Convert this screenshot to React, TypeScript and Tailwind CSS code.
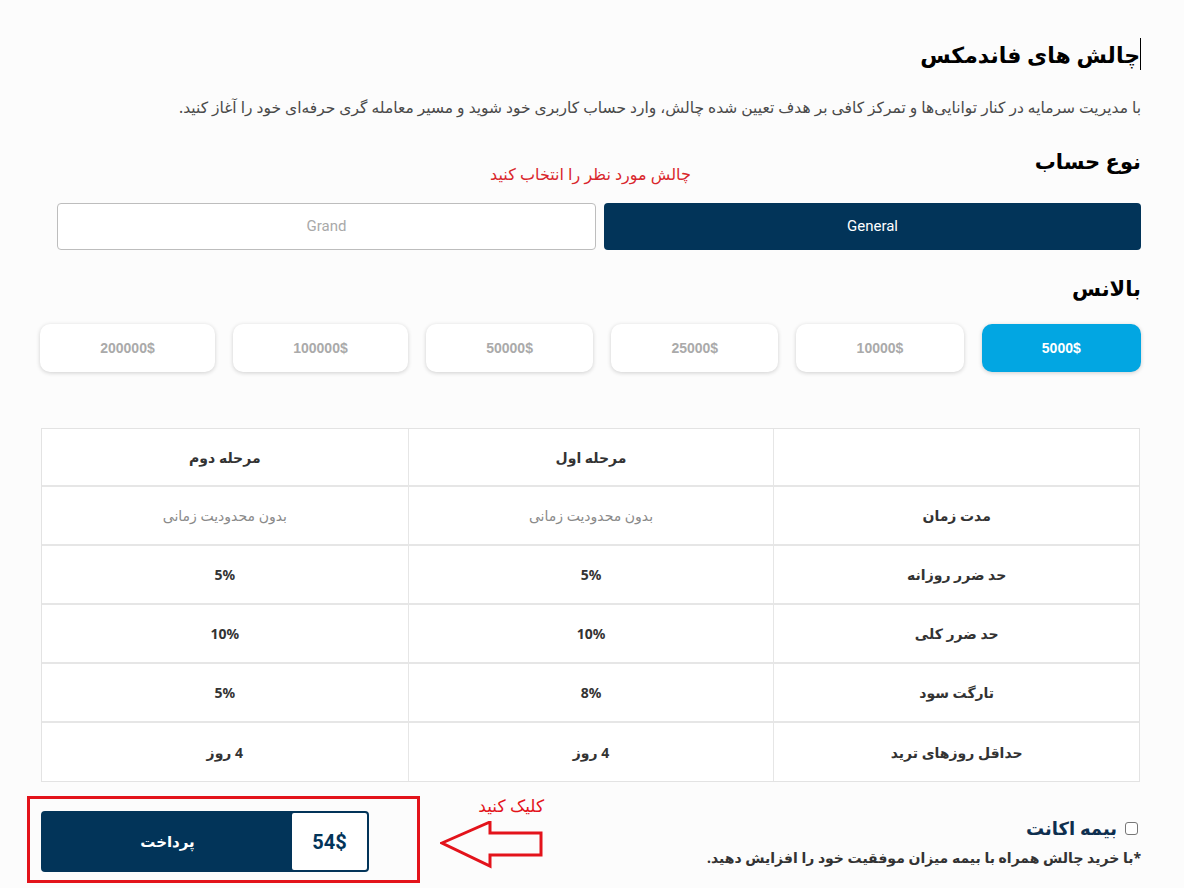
import React from "react"

const fa = { fontFamily: '"Noto Sans", "DejaVu Sans", sans-serif' }

const balances = ["5000$", "10000$", "25000$", "50000$", "100000$", "200000$"]

const rows = [
  { label: "مدت زمان", a: "بدون محدودیت زمانی", b: "بدون محدودیت زمانی", muted: true },
  { label: "حد ضرر روزانه", a: "5%", b: "5%" },
  { label: "حد ضرر کلی", a: "10%", b: "10%" },
  { label: "تارگت سود", a: "8%", b: "5%" },
  { label: "حداقل روزهای ترید", a: "4 روز", b: "4 روز" },
]

function Arrow() {
  return (
    <svg width="104" height="48" viewBox="0 0 104 48" fill="none">
      <polygon
        points="2,22 50,1 50,12 101,12 101,34 50,34 50,45"
        stroke="#e3131b"
        strokeWidth="3"
        strokeLinejoin="miter"
        fill="none"
      />
    </svg>
  )
}

export default function App() {
  return (
    <div className="min-h-[888px] bg-[#fcfcfc] text-[#222]" style={fa}>
      <div dir="rtl" className="ml-[40px] w-[1101px] pt-[36px]">
        {/* Title */}
        <div className="flex items-center">
          <span className="w-px h-[32px] bg-black" />
          <h1 className="text-[22px] font-bold text-black leading-[36px]">چالش های فاندمکس</h1>
        </div>
        <p className="mt-[23px] text-[15.5px] text-[#4a4a4a] leading-[24px]">
          با مدیریت سرمایه در کنار توانایی‌ها و تمرکز کافی بر هدف تعیین شده چالش، وارد حساب کاربری خود شوید و مسیر معامله گری حرفه‌ای خود را آغاز کنید.
        </p>

        {/* Account type */}
        <div className="mt-[26px] grid grid-cols-[1fr_auto_1fr] items-end">
          <h2 className="text-[21px] font-bold text-black leading-[32px]">نوع حساب</h2>
          <span className="text-[16px] text-[#d9262c] leading-[22px] -mb-[8px]">چالش مورد نظر را انتخاب کنید</span>
          <span />
        </div>
        <div className="mt-[26px] mr-0 ml-[17px] flex gap-[8px]">
          <button
            className="flex-1 h-[47px] rounded-[4px] bg-[#023459] text-white text-[15px]"
            style={{ fontFamily: "Roboto, sans-serif" }}
          >
            General
          </button>
          <button
            className="flex-1 h-[47px] rounded-[4px] bg-white border border-[#bdbdbd] text-[#a9a9a9] text-[15px]"
            style={{ fontFamily: "Roboto, sans-serif" }}
          >
            Grand
          </button>
        </div>

        {/* Balance */}
        <h2 className="mt-[22px] text-[21px] font-bold text-black leading-[32px]">بالانس</h2>
        <div className="mt-[20px] flex gap-[18px]">
          {balances.map((b, i) => (
            <button
              key={b}
              dir="ltr"
              className={
                i === 0
                  ? "flex-auto h-[48px] rounded-[10px] bg-[#02a6e2] text-white text-[14px] font-bold shadow-[0_1px_4px_rgba(0,0,0,0.18)]"
                  : "flex-auto h-[48px] rounded-[10px] bg-white text-[#aaaaaa] text-[14px] font-bold shadow-[0_1px_4px_rgba(0,0,0,0.18)]"
              }
              style={{ fontFamily: '"Liberation Sans", Arial, sans-serif' }}
            >
              {b}
            </button>
          ))}
        </div>

        {/* Table */}
        <div className="mt-[56px] mr-[1px] w-[1099px] border border-[#e3e3e3] bg-white">
          <div className="grid grid-cols-3 h-[58px] border-b-2 border-[#e6e6e6] text-[14px] font-bold text-[#333]">
            <div className="border-l border-[#e6e6e6]" />
            <div className="flex items-center justify-center border-l border-[#e6e6e6]">مرحله اول</div>
            <div className="flex items-center justify-center">مرحله دوم</div>
          </div>
          {rows.map((r, i) => (
            <div
              key={r.label}
              className={
                i < rows.length - 1
                  ? "grid grid-cols-3 h-[59px] border-b-2 border-[#e6e6e6] text-[14px]"
                  : "grid grid-cols-3 h-[58px] text-[14px]"
              }
            >
              <div className="flex items-center justify-center border-l border-[#e6e6e6] font-semibold text-[#333]">
                {r.label}
              </div>
              <div
                className={
                  r.muted
                    ? "flex items-center justify-center border-l border-[#e6e6e6] text-[#8a8a8a]"
                    : "flex items-center justify-center border-l border-[#e6e6e6] font-bold text-[#333]"
                }
              >
                {r.a}
              </div>
              <div
                className={
                  r.muted
                    ? "flex items-center justify-center text-[#8a8a8a]"
                    : "flex items-center justify-center font-bold text-[#333]"
                }
              >
                {r.b}
              </div>
            </div>
          ))}
        </div>

        {/* Bottom */}
        <div className="mt-[14px] flex justify-between items-start">
          <div className="pt-[20px] pr-[3px]">
            <label className="flex items-center gap-[8px]">
              <span className="w-[13px] h-[13px] rounded-[3px] border border-[#777] bg-white" />
              <span className="text-[18px] font-bold text-[#0e2f4f] leading-[24px]">بیمه اکانت</span>
            </label>
            <p className="mt-[6px] -mr-[3px] text-[14px] font-bold text-[#333] leading-[24px]">
              *با خرید چالش همراه با بیمه میزان موفقیت خود را افزایش دهید.
            </p>
          </div>

          <div className="flex items-start gap-[18px] -ml-[13px]">
            <div className="flex flex-col items-start">
              <span className="text-[17px] text-[#e3131b] leading-[20px]">کلیک کنید</span>
              <div className="mt-[5px] ml-[2px]">
                <Arrow />
              </div>
            </div>
            <div className="w-[393px] h-[87px] border-[3px] border-[#e3131b] pt-[12px] pl-[11px] pr-[48px]">
              <div className="flex h-[61px] rounded-[4px] border-[2px] border-[#023459] bg-[#023459] overflow-hidden">
                <div
                  dir="ltr"
                  className="w-[75px] flex items-center justify-center bg-white text-[#023459] text-[20px] font-bold rounded-l-[2px]"
                  style={{ fontFamily: "Roboto, sans-serif" }}
                >
                  54$
                </div>
                <div className="flex-1 flex items-center justify-center text-white text-[15px] font-bold">پرداخت</div>
              </div>
            </div>
          </div>
        </div>
      </div>
    </div>
  )
}
